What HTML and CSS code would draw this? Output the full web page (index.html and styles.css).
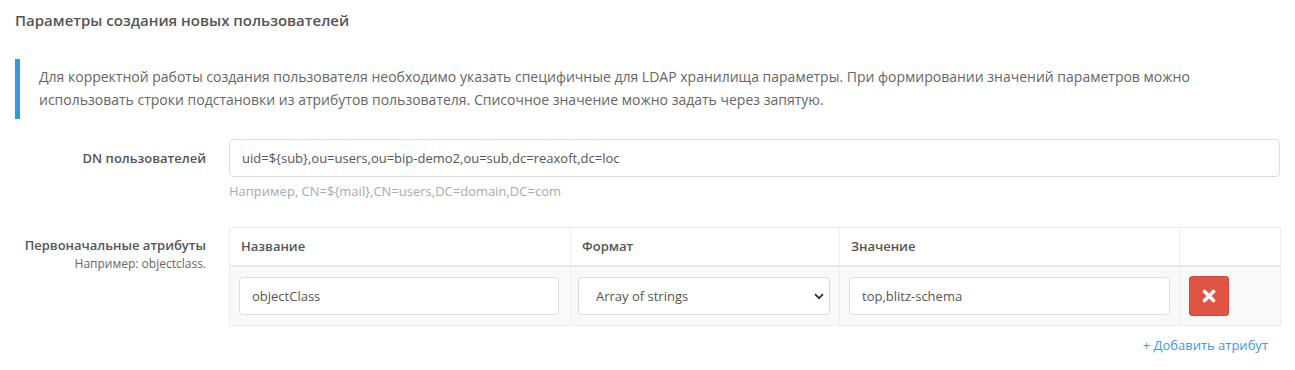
FILE: index.html
```html
<!DOCTYPE html>
<html lang="ru">
<head>
  <meta charset="UTF-8">
  <meta name="viewport" content="width=device-width, initial-scale=1.0">
  <title>Параметры создания новых пользователей</title>
  <link rel="stylesheet" href="styles.css">
</head>
<body>
<div class="page">
  <h4 class="section-title">Параметры создания новых пользователей</h4>

  <div class="callout">
    Для корректной работы создания пользователя необходимо указать специфичные для LDAP хранилища параметры. При формировании значений параметров можно
    использовать строки подстановки из атрибутов пользователя. Списочное значение можно задать через запятую.
  </div>

  <div class="form-row">
    <label class="form-label" for="userDn">DN пользователей</label>
    <div class="form-field">
      <input class="form-control" id="userDn" type="text" value="uid=${sub},ou=users,ou=bip-demo2,ou=sub,dc=reaxoft,dc=loc">
      <p class="help-text">Например, CN=${mail},CN=users,DC=domain,DC=com</p>
    </div>
  </div>

  <div class="form-row form-row-attrs">
    <div class="form-label">
      Первоначальные атрибуты
      <small class="label-hint">Например: objectclass.</small>
    </div>
    <div class="form-field">
      <table class="attrs-table">
        <thead>
          <tr>
            <th class="col-name">Название</th>
            <th class="col-format">Формат</th>
            <th class="col-value">Значение</th>
            <th class="col-action"></th>
          </tr>
        </thead>
        <tbody>
          <tr>
            <td><input class="form-control" type="text" value="objectClass"></td>
            <td>
              <div class="select-wrap">
                <select class="form-control">
                  <option>Array of strings</option>
                  <option>String</option>
                  <option>Integer</option>
                </select>
                <svg class="select-arrow" width="10" height="7" viewBox="0 0 10 7"><path d="M1 1.2l4 4 4-4" fill="none" stroke="#333" stroke-width="1.8"/></svg>
              </div>
            </td>
            <td><input class="form-control" type="text" value="top,blitz-schema"></td>
            <td>
              <button class="btn-remove" type="button" title="Удалить">
                <svg width="14" height="14" viewBox="0 0 14 14"><path d="M2.5 2.5l9 9M11.5 2.5l-9 9" stroke="#fff" stroke-width="3.6" stroke-linecap="round"/></svg>
              </button>
            </td>
          </tr>
        </tbody>
      </table>
      <div class="add-row">
        <a class="add-link" href="#">+ Добавить атрибут</a>
      </div>
    </div>
  </div>
</div>
</body>
</html>
```

FILE: styles.css
```css
* {
  margin: 0;
  padding: 0;
  box-sizing: border-box;
}

body {
  font-family: 'Open Sans', 'Liberation Sans', sans-serif;
  font-size: 13px;
  color: #666;
  background: #fff;
}

.page {
  padding: 10px 15px 0 15px;
}

.section-title {
  font-size: 15px;
  font-weight: 600;
  color: #555;
  line-height: 20px;
  margin-bottom: 29px;
}

.callout {
  border-left: 5px solid #3498db;
  padding: 7px 20px 8px 19px;
  font-size: 14px;
  line-height: 22.5px;
  color: #666;
  margin-bottom: 20px;
}

.form-row {
  display: flex;
}

.form-label {
  width: 214px;
  flex-shrink: 0;
  padding-right: 23px;
  text-align: right;
  font-weight: 600;
  color: #555;
  font-size: 13px;
  line-height: 38px;
}

.form-row-attrs .form-label {
  line-height: 20px;
  padding-top: 8px;
}

.label-hint {
  display: block;
  font-weight: 400;
  font-size: 12px;
  line-height: 17px;
  color: #666;
}

.form-field {
  flex: 1;
}

.form-control {
  display: block;
  width: 100%;
  height: 38px;
  padding: 0 12px;
  border: 1px solid #ddd;
  border-radius: 4px;
  background: #fff;
  font-family: inherit;
  font-size: 13px;
  color: #555;
}

.help-text {
  color: #aaa;
  font-size: 13px;
  line-height: 18px;
  margin-top: 5px;
  margin-bottom: 27px;
}

.attrs-table {
  width: 100%;
  border-collapse: collapse;
  table-layout: fixed;
}

.attrs-table th,
.attrs-table td {
  border: 1px solid #eee;
  padding: 9px 9px;
  text-align: left;
  vertical-align: middle;
}

.attrs-table td:first-child {
  padding-right: 11px;
}

.attrs-table th {
  font-weight: 600;
  color: #555;
  font-size: 13px;
  height: 38px;
  padding: 8px 11px;
  border-bottom: 2px solid #e8e8e8;
}

.attrs-table tbody td {
  background: #f9f9f9;
}

.col-name { width: 341px; }
.col-format { width: 269px; }
.col-value { width: 340px; }
.col-action { width: 101px; }

.select-wrap {
  position: relative;
  margin-left: -2px;
}

.select-wrap select {
  appearance: none;
  -webkit-appearance: none;
  padding-left: 17px;
}

.select-arrow {
  position: absolute;
  right: 6px;
  top: 16px;
  pointer-events: none;
}

.btn-remove {
  display: flex;
  align-items: center;
  justify-content: center;
  width: 40px;
  height: 40px;
  border: 1px solid #d4453a;
  border-radius: 3px;
  background: #df5442;
  cursor: pointer;
}

.add-row {
  text-align: right;
  padding: 10px 13px 0 0;
}

.add-link {
  color: #3c9be0;
  text-decoration: none;
  font-size: 13px;
  line-height: 18px;
}
```
